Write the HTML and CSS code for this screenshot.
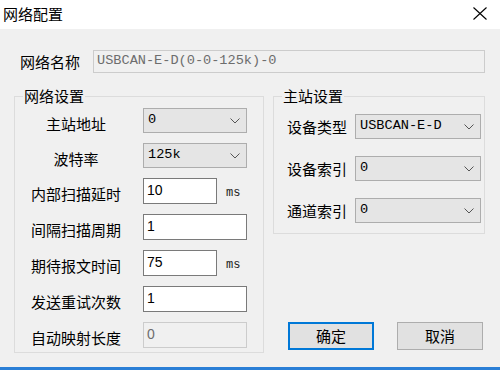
FILE: index.html
```html
<!DOCTYPE html>
<html lang="zh">
<head>
<meta charset="utf-8">
<title>网络配置</title>
<link rel="stylesheet" href="styles.css">
</head>
<body>
<div class="window">
  <div class="titlebar">
    <span class="title">网络配置</span>
    <svg class="close" width="14" height="13" viewBox="0 0 14 13"><path d="M0.5 0.5 L13.5 12.5 M13.5 0.5 L0.5 12.5" stroke="#000" stroke-width="1.1" fill="none"/></svg>
  </div>
  <div class="content">
    <div class="name-row">
      <span class="label">网络名称</span>
      <div class="field disabled mono name-field">USBCAN-E-D(0-0-125k)-0</div>
    </div>
    <div class="columns">
      <fieldset class="group group-left">
        <legend>网络设置</legend>
        <div class="form">
          <span class="flabel">主站地址</span>
          <div class="combo"><span class="mono">0</span><svg class="chev" width="10" height="6" viewBox="0 0 10 6"><path d="M0.5 0.5 L5 5 L9.5 0.5" stroke="#555" fill="none"/></svg></div>

          <span class="flabel">波特率</span>
          <div class="combo"><span class="mono">125k</span><svg class="chev" width="10" height="6" viewBox="0 0 10 6"><path d="M0.5 0.5 L5 5 L9.5 0.5" stroke="#555" fill="none"/></svg></div>

          <span class="flabel">内部扫描延时</span>
          <div class="with-unit"><div class="field short">10</div><span class="unit">ms</span></div>

          <span class="flabel">间隔扫描周期</span>
          <div class="field">1</div>

          <span class="flabel">期待报文时间</span>
          <div class="with-unit"><div class="field short">75</div><span class="unit">ms</span></div>

          <span class="flabel">发送重试次数</span>
          <div class="field">1</div>

          <span class="flabel">自动映射长度</span>
          <div class="field disabled">0</div>
        </div>
      </fieldset>
      <div class="right-col">
        <fieldset class="group group-right">
          <legend>主站设置</legend>
          <div class="form form-right">
            <span class="rlabel">设备类型</span>
            <div class="combo"><span class="mono">USBCAN-E-D</span><svg class="chev" width="10" height="6" viewBox="0 0 10 6"><path d="M0.5 0.5 L5 5 L9.5 0.5" stroke="#555" fill="none"/></svg></div>
            <span class="rlabel">设备索引</span>
            <div class="combo"><span class="mono">0</span><svg class="chev" width="10" height="6" viewBox="0 0 10 6"><path d="M0.5 0.5 L5 5 L9.5 0.5" stroke="#555" fill="none"/></svg></div>
            <span class="rlabel">通道索引</span>
            <div class="combo"><span class="mono">0</span><svg class="chev" width="10" height="6" viewBox="0 0 10 6"><path d="M0.5 0.5 L5 5 L9.5 0.5" stroke="#555" fill="none"/></svg></div>
          </div>
        </fieldset>
        <div class="buttons">
          <button class="btn btn-default">确定</button>
          <button class="btn">取消</button>
        </div>
      </div>
    </div>
  </div>
</div>
</body>
</html>
```

FILE: styles.css
```css
* { box-sizing: border-box; }
html, body { margin: 0; padding: 0; }
body {
  width: 500px;
  height: 370px;
  overflow: hidden;
  font-family: "Noto Sans CJK SC", "Noto Sans", sans-serif;
  color: #000;
  background: #f0f0f0;
}
.window {
  width: 500px;
  height: 370px;
  display: flex;
  flex-direction: column;
  border-bottom: 3px solid #2a7fd6;
}
.titlebar {
  height: 29px;
  flex: none;
  background: #fff;
  display: flex;
  align-items: center;
  justify-content: space-between;
  padding: 0 13px 1px 3px;
}
.title { font-size: 15px; line-height: 16px; }
.close { display: block; margin-top: -1px; }

.content {
  flex: 1;
  background: #f0f0f0;
  padding: 21px 15px 0 14px;
}
.name-row {
  display: flex;
  align-items: center;
  height: 23px;
}
.label {
  font-size: 15px;
  line-height: 16px;
  width: 79px;
  padding-left: 6px;
  flex: none;
}
.mono {
  font-family: "Liberation Mono", "DejaVu Sans Mono", monospace;
  font-size: 13.6px;
}
.field {
  height: 26px;
  width: 104px;
  background: #fff;
  border: 1px solid #7a7a7a;
  font-family: "Liberation Sans", Arial, sans-serif;
  font-size: 14px;
  line-height: 20px;
  padding: 1px 0 0 3px;
}
.field.short { width: 74px; }
.field.disabled {
  background: #f0f0f0;
  border-color: #cccccc;
  color: #6d6d6d;
}
.name-field {
  flex: 1;
  width: auto;
  height: 23px;
  line-height: 20px;
  padding-top: 0;
  font-family: "Liberation Mono", "DejaVu Sans Mono", monospace;
  font-size: 13.6px;
}

.columns {
  display: flex;
  margin-top: 15px;
  gap: 9px;
}
.group {
  margin: 0;
  padding: 0;
  min-width: 0;
  border: 1px solid #dcdcdc;
}
.group legend {
  font-size: 15px;
  line-height: 16px;
  padding: 0 1px;
  margin-left: 8px;
}
.group-left {
  width: 250px;
  height: 265px;
}
.form {
  display: grid;
  grid-template-columns: 108px 104px;
  column-gap: 13px;
  row-gap: 10px;
  padding: 4px 0 0 7px;
  align-items: center;
}
.flabel {
  font-size: 15px;
  line-height: 16px;
  text-align: center;
  padding-top: 6px;
}
.combo {
  height: 25px;
  background: #e5e5e5;
  border: 1px solid #adadad;
  display: flex;
  align-items: center;
  justify-content: space-between;
  padding: 0 6px 0 4px;
}
.combo .mono { line-height: 18px; margin-top: -2px; }
.chev { display: block; }
.with-unit {
  display: flex;
  align-items: center;
}
.unit {
  font-family: "Liberation Mono", monospace;
  font-size: 12px;
  margin-left: 9px;
  padding-top: 3px;
  color: #222;
}

.right-col {
  width: 212px;
  height: 265px;
  display: flex;
  flex-direction: column;
  justify-content: space-between;
}
.group-right {
  height: 146px;
}
.form-right {
  grid-template-columns: 60px 126px;
  column-gap: 8px;
  row-gap: 17px;
  padding: 10px 0 0 13px;
}
.rlabel {
  font-size: 15px;
  line-height: 16px;
}
.buttons {
  display: flex;
  gap: 23px;
  padding-left: 15px;
  margin-bottom: 3px;
}
.btn {
  width: 86px;
  height: 28px;
  background: #e1e1e1;
  border: 1px solid #adadad;
  font-family: "Noto Sans CJK SC", sans-serif;
  font-size: 15px;
  line-height: 16px;
  color: #000;
  padding: 0;
}
.btn-default {
  border: 2px solid #0078d7;
}
```
